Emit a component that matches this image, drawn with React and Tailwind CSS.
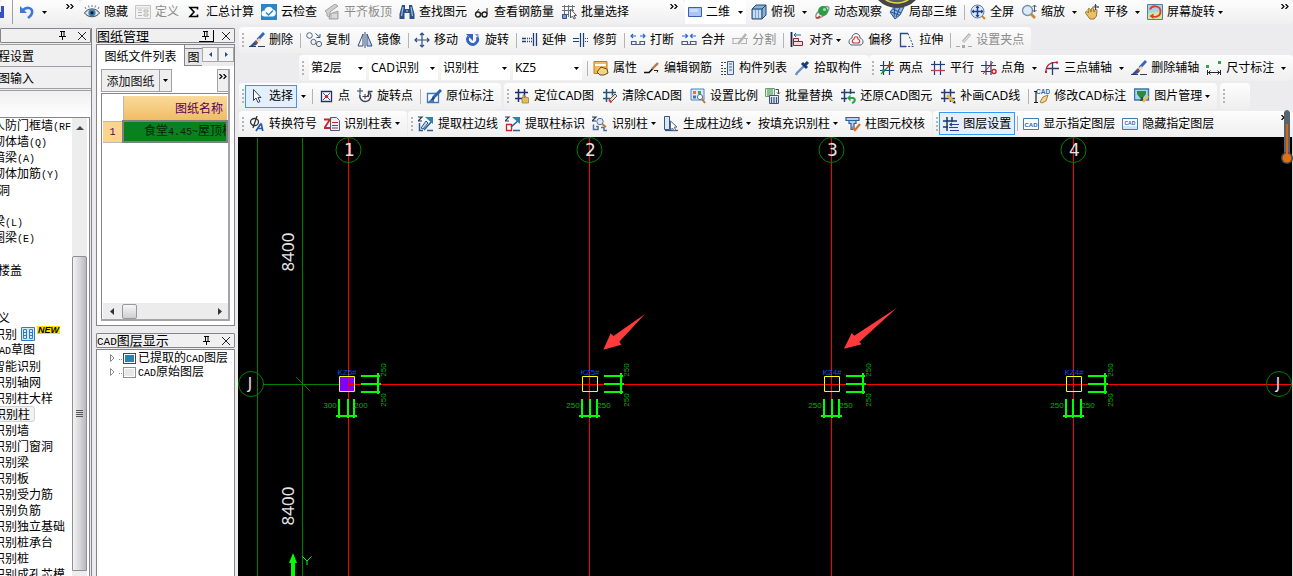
import React from "react";

const NAVY = "#1f3f7a";

function Svg({ children }) {
  return (
    <svg viewBox="0 0 16 16" className="h-4 w-4 shrink-0" fill="none" aria-hidden="true">
      {children}
    </svg>
  );
}

const grid = "M4.5 1v14M10.5 1v14M1 5.5h14M1 10.5h14";

const icons = {
  save: (
    <>
      <path d="M1 2h14v12H1z" fill="#3b4fc4" />
      <path d="M4 2h8v6H4z" fill="#e8ecfa" />
      <path d="M5 10h6v4H5z" fill="#c9cdea" />
    </>
  ),
  undo: (
    <>
      <path d="M4 6c4-4 10-2 9 3-.5 3-3 4-4 5" stroke="#3f78d6" strokeWidth="2.6" />
      <path d="M1 2v7h7z" fill="#3f78d6" />
    </>
  ),
  eye: (
    <>
      <path d="M.5 9C4 3.500 12 3.500 15.500 9 12 14 4 14 .5 9z" fill="#dfe7ee" stroke="#3a4650" />
      <circle cx="8" cy="8.800" r="3.600" fill="#3d7fb5" />
      <circle cx="8" cy="8.800" r="1.600" fill="#0d1a26" />
      <path d="M2 5 1 3M5 3.500 4.500 1.500M8 3V1M11 3.500l.5-2M14 5l1-2" stroke="#6f7c88" />
    </>
  ),
  define: (
    <>
      <path d="M.5 1.500h15v13H.5z" fill="#f3f3f3" stroke="#c4c4c4" />
      <path d="M.5 4h15" stroke="#d0d0d0" />
      <path d="M3 6h4M3 8.500h4M3 11.500h4M9 6h4v2H9zM9 10h4v2H9z" stroke="#b5b5b5" />
    </>
  ),
  sigma: <path d="M11.500 5.500v-2H4l4 4.500-4 4.500h7.500v-2" stroke="#000" strokeWidth="1.600" />,
  cloud: (
    <>
      <path d="M0 0h16v16H0z" fill="#2b86c9" />
      <path d="M3.500 12.500a3 3 0 0 1 0-6 4.500 4.500 0 0 1 8.500-1 3.600 3.600 0 0 1 0 7z" fill="#fff" />
      <path d="m5 8.500 2.500 2.500L12 6.500" stroke="#2b86c9" strokeWidth="1.500" />
    </>
  ),
  slab: (
    <>
      <path d="M1 7 11 0l3 2-8 6v5l-3-1V9z" fill="#cfcfcf" stroke="#a4a4a4" />
      <path d="M6 10l8-3v8H5z" fill="#c2c2c2" stroke="#a4a4a4" />
      <path d="M8 11h5M8 13h5" stroke="#f2f2f2" />
    </>
  ),
  binoc: (
    <>
      <path d="M3 1h3v4h4V1h3l2.500 9v5h-5V9h-5v6h-5v-5z" fill="#2c4f86" />
      <path d="M4 3 2.500 12M12 3l1.500 9" stroke="#9db9e4" strokeWidth="1.300" />
      <path d="M7 6h2v2H7z" fill="#6f93cc" />
    </>
  ),
  glasses: (
    <>
      <circle cx="4" cy="10.500" r="2.500" stroke="#222" strokeWidth="1.400" />
      <circle cx="10.500" cy="10.500" r="2.500" stroke="#222" strokeWidth="1.400" />
      <path d="M6.500 10h2M1.500 9.500 5 5M13 10V4" stroke="#222" />
    </>
  ),
  batchSel: (
    <>
      <path d="M3.500 1v13M7.500 1v12M11.500 1v6M1 2.500h13M1 6.500h12M1 10.500h7" stroke="#68727e" />
      <path d="M1.500 10.500h4v4h-4z" fill="#7f9dd8" stroke="#2f4fa0" />
      <path d="M9.500 5v9l2-2 1.500 3 1.500-.8-1.500-2.700h2.500z" fill="#fff" stroke="#555" />
    </>
  ),
  rect: (
    <>
      <path d="M1.500 3.500h13v9h-13z" fill="#a9c4f5" stroke="#3a5fb0" />
      <path d="M3 5h8v3H3z" fill="#cbdcfb" />
    </>
  ),
  cube: (
    <>
      <path d="M1 5 5 1h10v10l-4 4H1z" fill="#87b2dc" stroke="#24476f" />
      <path d="M1 5h10l4-4M11 5v10" stroke="#24476f" />
      <path d="M2 6h8v8H2z" fill="#c7def2" />
      <path d="M4.500 6v8M7.500 6v8" stroke="#7ba5cf" />
    </>
  ),
  orbit: (
    <>
      <ellipse cx="8" cy="8.500" rx="8" ry="3.500" transform="rotate(-40 8 8)" stroke="#8a93a0" strokeWidth="1.400" />
      <circle cx="9" cy="7" r="4.900" fill="#2e9b45" />
      <circle cx="10.500" cy="5.500" r="1.600" fill="#9fe0a0" />
      <path d="M2 13.500c2 1 3 0 4-1.500" stroke="#c9402e" strokeWidth="1.800" />
    </>
  ),
  local3d: (
    <>
      <path d="M1 8 6 2l9 1-4 8-5 4z" fill="#8fb6e6" stroke="#2a508c" />
      <path d="M4 5l8 4M6 2l-1 11M11 3 7 13M2 8l8 3" stroke="#2a508c" />
    </>
  ),
  full: (
    <>
      <circle cx="7.500" cy="7.500" r="6.500" fill="#dce8f7" stroke="#5d7fb0" />
      <path d="M7.500 2v11M2 7.500h11" stroke="#1c3f8a" strokeWidth="1.500" />
      <path d="m5.500 4 2-2.500 2 2.500zM5.500 11l2 2.500 2-2.500zM4 5.500 1.500 7.500 4 9.500zM11 5.500l2.500 2-2.500 2z" fill="#1c3f8a" />
      <path d="m12 12 3 3" stroke="#c98b2a" strokeWidth="2.200" />
    </>
  ),
  zoom: (
    <>
      <circle cx="6.500" cy="6.500" r="5" fill="#dbe9f8" stroke="#7391b3" strokeWidth="1.400" />
      <path d="m10 10 4 4" stroke="#c98b2a" strokeWidth="2.600" />
      <path d="M13.500 1v7M11.500 3l2-2 2 2M11.500 6l2 2 2-2" stroke="#4b5a70" />
    </>
  ),
  pan: (
    <>
      <path d="M1.500 9c0-2.500 2-2 3 0L4 5c.5-1 2-.5 2.300.5L7 8l.5-3.500C8 3.500 9.500 4 9.500 5l.5 3 1-2.500c.8-.8 2 0 2 1L12.500 12 10 15H6z" fill="#e7c06a" stroke="#9c7428" />
      <path d="M11.500 0v6M8.500 3h6M10.500 1.500l1-1 1 1M13.500 2l1 1-1 1" stroke="#3c4650" />
    </>
  ),
  screenRot: (
    <>
      <path d="M.5.500h15v15H.5z" fill="#a8d1ea" stroke="#4b83a6" />
      <path d="M1 10c4-3 9-1 14-3v8H1z" fill="#d5e79a" />
      <path d="M3 5.500c2-5 10.500-4 10.500 2 0 4.500-4 6-7.500 5" stroke="#e0392f" strokeWidth="1.800" />
      <path d="M6.500 9.500v5.500L2.500 12z" fill="#e0392f" />
    </>
  ),
  brush: (
    <>
      <path d="M15 1 8.500 8" stroke="#3666b8" strokeWidth="2.800" />
      <path d="m10 6-3 3 2 2 3-3z" fill="#f0d9a6" />
      <path d="M7 8 4 11l-3 3c3 .5 6 0 8-3z" fill="#344f8b" />
      <path d="M6 9.500 8 11" stroke="#cf3b3b" strokeWidth="1.400" />
      <path d="M0 14.500h7M9 14.500h7" stroke="#2b3f66" />
    </>
  ),
  copy: (
    <>
      <circle cx="3.500" cy="3.500" r="2.800" stroke="#556377" />
      <circle cx="7.500" cy="10" r="2.600" stroke="#556377" />
      <circle cx="13" cy="12" r="2.600" stroke="#556377" />
      <path d="m9.500 1.500 4 3.500M14 2v3.500h-3.500" stroke="#2956a8" />
    </>
  ),
  mirror: (
    <>
      <path d="M6 2v12H1z" stroke="#35507c" />
      <path d="M10 2v12h5z" fill="#b9cdec" stroke="#35507c" />
      <path d="M8 0v16" stroke="#35507c" />
    </>
  ),
  move: (
    <path d="M8 1v14M1 8h14M6 3l2-2 2 2M6 13l2 2 2-2M3 6 1 8l2 2M13 6l2 2-2 2" stroke="#2f4f80" strokeWidth="1.200" />
  ),
  rotate: (
    <>
      <path d="M3.500 4.500a5 5 0 1 0 8.500.5" stroke="#3263c8" strokeWidth="2.800" />
      <path d="M1 2h7v7z" fill="#3263c8" />
      <path d="M9.500 2h4v4" fill="#7ea1e6" />
    </>
  ),
  extend: (
    <path d="M0 6.500h4M0 9.500h4M5 6.500h1M7 6.500h1M9 6.500h1M5 9.500h1M7 9.500h1M9 9.500h1M11.500 1v13M14.500 1v13" stroke={NAVY} strokeWidth="1.300" />
  ),
  trim: (
    <path d="M0 6.500h6M0 9.500h6M7.500 1v14M10.500 1v14M12 6.500h1M14 6.500h1M12 9.500h1M14 9.500h1" stroke={NAVY} strokeWidth="1.200" />
  ),
  breakIt: (
    <>
      <path d="M1 4h5M3 2 1 4l2 2M15 4h-5M13 2l2 2-2 2" stroke="#2f66d0" strokeWidth="1.200" />
      <path d="M1.500 9.500H6v3H1.500zM10 9.500h4.500v3H10zM6 12.500h4" stroke="#4d5f78" strokeWidth="1.200" />
    </>
  ),
  merge: (
    <>
      <path d="M1 4h5M4.500 2l2 2-2 2M15 4h-5M11.500 2l-2 2 2 2" stroke="#2f66d0" strokeWidth="1.200" />
      <path d="M1 9.500h5.500v3H1zM9.500 9.500H15v3H9.500zM6 12.500h4" stroke="#4d5f78" strokeWidth="1.200" />
    </>
  ),
  split: (
    <>
      <path d="M0 6.500h9M12 6.500h4M0 11.500h5M9 11.500h6M1 6.500v5M14.500 6.500v5" stroke="#b2b2b2" />
      <path d="m6 12 8-10" stroke="#b4b4b4" strokeWidth="2.400" />
    </>
  ),
  align: (
    <>
      <path d="M2.500 0v15" stroke="#1b2a4a" strokeWidth="1.800" />
      <path d="M5 3h7M7 1 5 3l2 2" stroke="#2f54b8" />
      <path d="M4.500 6.500h5v3h4v4h-9z" fill="#f4dadd" stroke="#8d2537" />
      <path d="M5 9.500h5" stroke="#8d2537" />
    </>
  ),
  offset: (
    <>
      <path d="M4 6c0-6 8-6 8 0 4 1 4 7 0 7H4c-4 0-4-6 0-7z" stroke="#50627c" />
      <path d="M6 7c0-3 4-3 4 0 2.500 1 2 4 0 4H6c-2 0-2.500-3 0-4z" stroke="#d13a3a" strokeWidth="1.200" />
    </>
  ),
  stretch: (
    <>
      <path d="M9 1.500H1.500v13H7" stroke="#2b4c86" strokeWidth="1.300" />
      <path d="M9 1.500 14.500 14.500H7" stroke="#2b4c86" strokeDasharray="2 1.500" />
    </>
  ),
  grip: (
    <>
      <path d="M0 14.500h4M12 14.500h4" stroke="#a8a8a8" />
      <path d="M6 13h3v3H6z" fill="#a8a8a8" />
      <path d="m7 10 7-8" stroke="#b8b8b8" strokeWidth="3.200" />
      <path d="m7.500 10 6-7" stroke="#eee" />
    </>
  ),
  prop: (
    <>
      <path d="M1 1.500h13v12H1z" fill="#f5b75c" stroke="#c87a1f" />
      <path d="M2 4h11v2H2z" fill="#fff" />
      <path d="M4 12 8 7l6 2 1 4-4 2H7z" fill="#f4d18c" stroke="#6b4a17" />
    </>
  ),
  editBar: (
    <>
      <path d="M0 12.500h5l4-4" stroke="#111" strokeWidth="1.600" />
      <path d="m8 9 6-6" stroke="#b67a4a" strokeWidth="2.400" />
      <path d="M10 10.500h4l-1 2" stroke="#222" />
    </>
  ),
  list: (
    <>
      <path d="M2 2.500h2M2 5.500h2M2 8.500h2M2 11.500h2M5 2.500h2M5 8.500h2M5 11.500h2M5 14.500h2M2 14.500h2" stroke="#444" />
      <path d="M8.500 1.500h6v13h-6z" fill="#dfe9f8" stroke="#3d5f96" />
      <path d="M10 4h3M10 7h3M10 10h3" stroke="#3d5f96" />
    </>
  ),
  dropper: (
    <>
      <path d="m11 5-8 8-1 2" stroke="#6d90c2" strokeWidth="2.400" />
      <path d="m8 3 5 5M11 5l3-3" stroke="#153c7d" strokeWidth="3" />
    </>
  ),
  twoPoint: (
    <>
      <path d={grid} stroke={NAVY} strokeWidth="1.200" />
      <path d="m2 14 12-12" stroke="#2c8f2c" strokeWidth="1.200" />
      <circle cx="10.500" cy="5.500" r="1.600" fill="#c9232b" />
      <circle cx="4.500" cy="10.500" r="1.600" fill="#238a29" />
    </>
  ),
  parallel: (
    <>
      <path d="M4.500 1v14M10.500 1v14" stroke={NAVY} strokeWidth="1.200" />
      <path d="M1 4.500h14" stroke={NAVY} strokeWidth="1.200" />
      <path d="M1 10.500h14" stroke="#c13e4d" strokeWidth="1.300" />
    </>
  ),
  pointAngle: (
    <>
      <path d="M5 1v14M10 1v14M0 5.500h15M0 11.500h10" stroke={NAVY} strokeWidth="1.200" />
      <path d="M2 14 12 2" stroke="#c9232b" />
      <circle cx="13" cy="11.500" r="2" fill="#fff" stroke="#c9232b" strokeWidth="1.500" />
    </>
  ),
  threeArc: (
    <>
      <path d="M2 12C2 5 6 2 13 2.500" stroke="#c9232b" strokeWidth="1.300" />
      <path d="M8.500 2v13M3 8.500h12" stroke="#2b3f74" strokeWidth="1.300" />
      <path d="M1 11h2v2H1zM12 1.500h2v2h-2z" fill="#c9232b" />
    </>
  ),
  dim: (
    <>
      <path d="M0 5h3v3H0zM12 1h3v3h-3z" fill="#35a243" />
      <path d="M1.500 10v5M14.500 10v5M2 12.500h12M4.500 10.500l-2 2 2 2M11.500 10.500l2 2-2 2" stroke="#20242c" />
    </>
  ),
  cursor: <path d="M4.500 1.500v11l2.500-2.500 2 4.500 2-1-2-4H12z" fill="#fff" stroke="#33435e" />,
  point: (
    <>
      <path d="M3.500 3.500h10v10h-10z" fill="#fff" stroke="#25305c" strokeWidth="1.300" />
      <path d="m5 5 7 7M12 5l-7 7" stroke="#3650a8" />
      <circle cx="8.500" cy="8.500" r="1.800" fill="#d02a2a" />
    </>
  ),
  rotPoint: (
    <>
      <path d="M3 6.500a5.500 5.500 0 1 0 9.500-2" stroke="#33415a" strokeWidth="1.400" />
      <path d="M0 3h6M3 0v6M8 6v5M5.500 8.500h5" stroke="#33415a" />
      <path d="M11.500 7.500v-4h4" stroke="#33415a" strokeWidth="1.300" />
      <path d="M10 7h2v2h-2z" fill="#c9232b" />
    </>
  ),
  annot: (
    <>
      <path d="M1.500 5.500h11v9h-11z" fill="#fff" stroke="#4176bd" strokeWidth="1.300" />
      <path d="M2 14 8 8v6z" fill="#4176bd" />
      <path d="m7 10 8-8" stroke="#2a62ac" strokeWidth="3" />
      <path d="m5 12 2-3 2 2z" fill="#24354f" />
    </>
  ),
  locate: (
    <>
      <path d="M4.500 1v13M10.500 1v7M1 4.500h13M1 10.500h7" stroke="#1d2d73" strokeWidth="1.500" />
      <path d="M8 15V9l1 1V7h1.500v3l1-2 1 2 1-1 1 1v5z" fill="#e2bd61" stroke="#94702a" strokeWidth=".7" />
    </>
  ),
  clearCad: (
    <>
      <path d="M4.500 1v13M10.500 1v7M1 4.500h13M1 10.500h7" stroke="#26557a" strokeWidth="1.500" />
      <path d="m8 13 5-6" stroke="#eadfca" strokeWidth="3.500" />
      <path d="m7 12 6-6 2 2-6 6z" stroke="#5b4b55" />
      <path d="m7 12 2.500 2.500" stroke="#c33" strokeWidth="1.800" />
    </>
  ),
  scale: (
    <>
      <path d="M1 1h13v11H1z" fill="#dcebfa" stroke="#4b86c2" />
      <path d="M3 3h3v3H3z" fill="#e2792b" />
      <path d="M8 3h3v3H8z" fill="#55a33e" />
      <path d="M3 7.500h3v3H3z" fill="#3d74c7" />
      <circle cx="10" cy="9" r="2.600" fill="#fff" stroke="#58708e" />
      <path d="m12 11 3 4" stroke="#b67626" strokeWidth="1.800" />
    </>
  ),
  replace: (
    <>
      <path d="M.5.500h9v8h-9z" fill="#dcefdc" stroke="#65a06b" />
      <path d="M3 1v7M5 1v7M7 1v7" stroke="#478a4f" />
      <path d="M4.500 7.500h9v8h-9z" fill="#eef3fb" stroke="#3b5480" />
      <path d="M6.500 9v6M9 9v6M11.500 9v6" stroke="#3b5480" strokeWidth="1.300" />
      <path d="M10.500 1.500h3V6M12 4.500 13.500 6 15 4.500" stroke="#444" />
    </>
  ),
  restore: (
    <>
      <path d="M4.500 1v13M10.500 1v5M1 4.500h14M1 10.500h6" stroke="#20407d" strokeWidth="1.500" />
      <path d="M9 10h4c3 1 2 4-1 5" stroke="#2ea043" strokeWidth="2" />
      <path d="M10.500 6.500v7L7 10z" fill="#2ea043" />
    </>
  ),
  patch: (
    <>
      <path d="M4.500 1v13M10.500 1v13M1 4.500h14M1 10.500h14" stroke="#253a7c" strokeWidth="1.500" />
      <path d="m7 7 6.500 6.500" stroke="#e2b74d" strokeWidth="2.800" />
      <path d="m12.500 15 3 .5-.5-3z" fill="#222" />
    </>
  ),
  cadEdit: (
    <>
      <text x="2" y="6" fontSize="6.500" fontWeight="700" fontFamily="Liberation Sans, sans-serif" fill="#2a6fb4">CAD</text>
      <path d="M2 3v12M0 3.500h3M0 14.500h4" stroke="#1a1a1a" strokeWidth="1.200" />
      <path d="m6 14 3-5 5-2-2 6-4 2z" fill="#f2d49a" stroke="#a87b35" />
    </>
  ),
  picture: (
    <>
      <path d="M.5 1h14v11H.5z" fill="#a8d3f4" stroke="#3d74ab" strokeWidth="1.400" />
      <path d="M3 3h9v3l-3 4H6L3 6z" fill="#2c8a39" />
      <path d="M7 9h2v4H6z" fill="#33513a" />
      <path d="m9 14 5-6" stroke="#e8bd56" strokeWidth="2.600" />
    </>
  ),
  phi: (
    <>
      <ellipse cx="5.500" cy="6" rx="4" ry="3.500" stroke="#30343c" strokeWidth="1.300" />
      <path d="M8 0 4 12" stroke="#30343c" strokeWidth="1.300" />
      <path d="m7 15 4.500-7h.8l1.500 7M9.500 12.500h4" stroke="#2a5cac" strokeWidth="1.700" />
    </>
  ),
  table: (
    <>
      <path d="M6.500 1.500h6l3 3v10h-9z" fill="#eaf1fa" stroke="#3f5b86" />
      <path d="M8 6.500h6M8 9.500h6M8 12h6" stroke="#c9232b" />
      <path d="M0 3.500h6L.5 12H6" stroke="#c9232b" strokeWidth="1.800" />
    </>
  ),
  edge: (
    <>
      <path d="M0 1h4L0 5h4" stroke="#22365c" strokeWidth="1.200" />
      <path d="M1.500 7v7.500H5M6 14 14 5M9 14.500h6" stroke="#2b5e95" strokeWidth="1.500" />
      <path d="m7 1 8 0v7z" fill="#2f83aa" />
      <path d="m3 12 5-7 2 2-5 6z" fill="#bfdcf0" stroke="#28598a" />
    </>
  ),
  mark: (
    <>
      <path d="M0 1h4L0 5h4" stroke="#22365c" strokeWidth="1.200" />
      <path d="M1.500 8.500h5v6h-5z" fill="#fff" stroke="#c9232b" strokeWidth="1.300" />
      <path d="M6 11 14 4M8 14.500h7" stroke="#2b5e95" strokeWidth="1.500" />
      <path d="m7 1 8 0v7z" fill="#2f83aa" />
    </>
  ),
  recog: (
    <>
      <path d="M0 1h4L0 5h4" stroke="#22365c" strokeWidth="1.200" />
      <circle cx="8" cy="5.500" r="3.200" fill="#dbe9f8" stroke="#52709c" />
      <path d="m10 8 4 3" stroke="#ba7d34" strokeWidth="2" />
      <path d="M1.500 8.500v5H6v-3H4M9 11.500h3v3h3" stroke="#52709c" strokeWidth="1.500" />
    </>
  ),
  gen: (
    <>
      <path d="M1.500.5h5v13h-5z" fill="#dbe6f5" stroke="#36558a" />
      <path d="M2 14.500h13" stroke="#36558a" strokeWidth="1.300" />
      <path d="M7.500 5v9l2-2 1.500 3 1.500-.8L11.500 11H14z" fill="#fff" stroke="#59657a" />
    </>
  ),
  check: (
    <>
      <path d="M1 1.500h13v3H1zM4 4.500h7v3H9v6H6v-6H4z" fill="#b5d2f0" stroke="#2c60a0" strokeWidth="1.200" />
      <path d="m7 11 3 3 5-6" stroke="#d5722b" strokeWidth="2.200" />
    </>
  ),
  layerSet: (
    <>
      <path d="M4 1v14M9 1v5M0 5h14M0 11h5" stroke="#1d3768" strokeWidth="1.500" />
      <path d="M8 8.500h8M6 11.500h9M7 14.500h9M9 7l-2 1.500L9 10" stroke="#2a3da0" strokeWidth="1.200" />
    </>
  ),
  cadShow: (
    <>
      <path d="M.5 2.500h15v11H.5z" fill="#fff" stroke="#3a7fb8" />
      <text x="1.500" y="10.500" fontSize="6" fontWeight="700" fontFamily="Liberation Sans, sans-serif" fill="#1f66ab">CAD</text>
    </>
  ),
  cadHide: (
    <>
      <path d="M.5 2.500h15v11H.5z" fill="#fff" stroke="#3a7fb8" />
      <path d="M1 10h14v3H1z" fill="#cfe4f5" />
      <text x="2.500" y="9" fontSize="5" fontWeight="700" fontFamily="Liberation Sans, sans-serif" fill="#1f66ab">CAD</text>
    </>
  ),
};

function Arrow() {
  return (
    <svg viewBox="0 0 5 3" className="h-[3px] w-[5px] shrink-0" aria-hidden="true">
      <path d="M0 0h5L2.500 3z" fill="#000" />
    </svg>
  );
}

function Tool({ icon, label, disabled, active, menu, split }) {
  const tone = disabled ? "text-[#8c8c8c]" : "text-black";
  const gap = label.includes("CAD") ? "mr-2" : "mr-[7px]";
  const frame = active ? "-ml-1 mr-0.5 h-[23px] border border-[#3399ff] bg-[#e3effb] px-[3px]" : split ? "" : gap;
  const button = (
    <button type="button" disabled={disabled} className={`flex shrink-0 items-center gap-1 ${tone} ${frame}`}>
      {icon && <Svg>{icons[icon]}</Svg>}
      <span>{label}</span>
      {menu && <span className="-ml-1 flex w-2 justify-end"><Arrow /></span>}
    </button>
  );
  if (!split) return button;
  return (
    <>
      {button}
      <button type="button" aria-label={`${label}选项`} className={`flex h-5 shrink-0 items-center justify-center ${active ? "mr-0.5 w-2" : "w-[19px]"}`}>
        <Arrow />
      </button>
    </>
  );
}

function Sep() {
  return <span className="mr-[5px] h-[15px] w-px shrink-0 bg-[#b4b4b8]" />;
}

function Bar({ children, grip = true, className = "" }) {
  return (
    <div role="toolbar" className={`flex h-[26px] shrink-0 items-center rounded-sm bg-linear-to-b from-[#fdfdfd] to-[#efefef] pl-[3px] ${className}`}>
      {grip && (
        <span className="mr-[5px] flex shrink-0 flex-col gap-0.5">
          <i className="h-0.5 w-0.5 bg-[#b5b5b9]" />
          <i className="h-0.5 w-0.5 bg-[#b5b5b9]" />
          <i className="h-0.5 w-0.5 bg-[#b5b5b9]" />
          <i className="h-0.5 w-0.5 bg-[#b5b5b9]" />
        </span>
      )}
      {children}
    </div>
  );
}

function Combo({ label, value, width, icon }) {
  return (
    <div className={`relative mr-[3px] block h-6 shrink-0 bg-white ${width}`}>
      {icon && <span className="absolute top-1 left-0.5"><Svg>{icons[icon]}</Svg></span>}
      <select aria-label={label} className={`h-6 w-full appearance-none bg-transparent leading-6 outline-none ${icon ? "pl-[21px]" : "pl-0.5"}`}>
        <option>{value}</option>
      </select>
      <span className="pointer-events-none absolute top-[11px] right-[3px] block"><Arrow /></span>
    </div>
  );
}

function More({ className = "" }) {
  return (
    <button type="button" aria-label="更多" className={`shrink-0 ${className}`}>
      <svg viewBox="0 0 8 5" className="h-[5px] w-2" fill="none">
        <path d="m.5 0 2.500 2.500L.5 5M4.500 0 7 2.500 4.500 5" stroke="#000" strokeWidth="1.200" />
      </svg>
    </button>
  );
}

function Mixed({ children, size = "text-[10px]" }) {
  return children.split(/([\x20-\x7e]+)/).map((part, i) =>
    /^[\x20-\x7e]+$/.test(part) ? (
      <span key={i} className={`font-['Liberation_Mono','Noto_Sans_CJK_SC',monospace] ${size}`}>{part}</span>
    ) : (
      part
    )
  );
}

function PanelHead({ title, raised }) {
  return (
    <div className="flex h-[15px] shrink-0 items-center rounded-[1px] border border-[#85858b] bg-[#f0f0f0]">
      <h2 className="min-w-0 flex-1 text-[13px] leading-[13px] whitespace-nowrap"><Mixed size="text-[11px]">{title}</Mixed></h2>
      <button type="button" aria-label="固定" className={`mr-1.5 flex h-3 w-[15px] items-center justify-center ${raised ? "border-r border-b border-black" : ""}`}>
        <svg viewBox="0 0 8 9" className="h-[9px] w-2" fill="none">
          <path d="M2.500 0v5M1 .5h5M5 0v5M0 5.500h7M3.500 6v3" stroke="#000" />
        </svg>
      </button>
      <button type="button" aria-label="关闭" className="mr-0.5 flex h-3 w-3 items-center justify-center">
        <svg viewBox="0 0 8 8" className="h-2 w-2" fill="none">
          <path d="m0 0 8 8M8 0 0 8" stroke="#222" />
        </svg>
      </button>
    </div>
  );
}

const tree = [
  "人防门框墙(RF", "砌体墙(Q)", "暗梁(A)", "砌体加筋(Y)", "洞", "", "梁(L)", "圈梁(E)", "", "楼盖", "", "",
  "义", "识别", "CAD草图", "智能识别", "识别轴网", "识别柱大样", "识别柱", "识别墙", "识别门窗洞", "识别梁",
  "识别板", "识别受力筋", "识别负筋", "识别独立基础", "识别桩承台", "识别桩", "识别成孔芯模",
];

function indent(text) {
  if (text === "楼盖") return "-ml-0.5";
  if (text.length === 1) return "-ml-0.5";
  return "-ml-[7px]";
}

function ModulePanel() {
  return (
    <aside className="flex w-[92px] shrink-0 flex-col overflow-hidden border-r border-[#85858b]">
      <PanelHead title="" />
      <button type="button" className="mt-px h-[23px] shrink-0 border-y border-[#a0a0a6] bg-[#f0f0f0] text-left"><span className="-ml-0.5">程设置</span></button>
      <button type="button" className="-mt-px h-[23px] shrink-0 border-y border-[#a0a0a6] bg-[#f0f0f0] text-left"><span className="-ml-0.5">图输入</span></button>
      <div className="mt-px h-[27px] shrink-0 border-t border-[#a0a0a6] bg-linear-to-b from-[#f0f0f0] to-white" />
      <div className="mr-px flex min-h-0 flex-1 border-t border-r border-[#85858b] bg-white">
        <ul className="min-w-0 flex-1 overflow-hidden leading-4 whitespace-nowrap">
          {tree.map((t, i) => (
            <li key={i} className="flex h-4 items-center">
              <span className={`inline-flex h-4 items-center ${indent(t)} ${t === "识别柱" ? "rounded-[3px] border border-[#d4d4d4] bg-[#f2f2f2] pr-1" : ""}`}>
                <span><Mixed>{t}</Mixed></span>
                {t === "识别" && (
                  <>
                    <svg viewBox="0 0 14 14" className="ml-1 h-3.5 w-3.5" fill="none" aria-hidden="true">
                      <path d="M.5.5h13v13H.5z" fill="#d6e9fb" stroke="#2d7cc8" />
                      <path d="M2.500 2.500h3v9h-3zM8.500 2.500h3v9h-3zM3 5.500h3M3 8.500h3M9 5.500h3M9 8.500h3" stroke="#2d7cc8" />
                    </svg>
                    <b className="mb-2 ml-0.5 bg-[#ffe100] px-px font-['Liberation_Sans',sans-serif] text-[9px] leading-2 italic">NEW</b>
                  </>
                )}
              </span>
            </li>
          ))}
        </ul>
        <div className="mr-0.5 flex w-[15px] shrink-0 flex-col items-center bg-[#ededee]">
          <svg viewBox="0 0 8 4" className="mt-2 h-1 w-2"><path d="M0 4h8L4 0z" fill="#444" /></svg>
          <div className="mt-[126px] flex w-full flex-1 flex-col items-center justify-center gap-px rounded-t-[2px] border border-[#8f8f93] bg-linear-to-r from-[#f3f3f3] via-[#d9d9dc] to-[#b9b9bd]">
            <i className="h-px w-[7px] bg-[#555]" />
            <i className="h-px w-[7px] bg-[#555]" />
            <i className="h-px w-[7px] bg-[#555]" />
            <i className="h-px w-[7px] bg-[#555]" />
          </div>
          <div className="h-[5px]" />
        </div>
      </div>
    </aside>
  );
}

function DrawingPanel() {
  return (
    <aside className="ml-1 flex w-[139px] shrink-0 flex-col">
      <PanelHead title="图纸管理" raised />
      <section className="mt-px flex h-[282px] shrink-0 flex-col border border-[#85858b] bg-white">
        <div className="flex h-[21px] shrink-0 items-end bg-[#ececee]">
          <button type="button" className="h-[21px] w-[88px] shrink-0 border-r border-[#85858b] bg-white leading-5">图纸文件列表</button>
          <button type="button" className="h-[18px] min-w-0 flex-1 border-t border-b border-[#85858b] bg-[#e6e6e6] leading-4">图</button>
          <button type="button" aria-label="向左" className="mb-1 flex h-[15px] w-4 items-center justify-center border border-[#a8a8ac] bg-[#f4f4f4]">
            <svg viewBox="0 0 3 5" className="h-[5px] w-[3px]"><path d="M3 0v5L0 2.500z" fill="#274c94" /></svg>
          </button>
          <button type="button" aria-label="向右" className="mb-1 flex h-[15px] w-4 items-center justify-center border border-[#a8a8ac] bg-[#f4f4f4]">
            <svg viewBox="0 0 3 5" className="h-[5px] w-[3px]"><path d="M0 0v5l3-2.500z" fill="#274c94" /></svg>
          </button>
        </div>
        <div className="m-1 mt-[3px] flex min-h-0 flex-1 flex-col border-r-2 border-b-2 border-[#a3a3a8]">
          <div className="flex h-[23px] shrink-0 items-stretch border border-[#a0a0a6] border-r-0 bg-[#efefef]">
            <button type="button" className="w-[58px] border-r border-[#a0a0a6] leading-5 whitespace-nowrap text-[#111]">添加图纸</button>
            <button type="button" aria-label="添加图纸选项" className="flex w-3 items-center justify-center border-r border-[#a0a0a6]"><Arrow /></button>
            <span className="-my-px flex-1 bg-white" />
            <More className="flex w-[11px] justify-center border-l border-[#a0a0a6] pt-1" />
          </div>
          <div className="mt-px flex min-h-0 flex-1 flex-col border-t border-l border-[#85858b] pt-0.5 pl-px">
            <table className="w-full table-fixed border-collapse">
              <thead>
                <tr className="h-[25px]">
                  <th aria-label="序号" className="w-5 border-r border-b border-[#b9b9bd] p-0" />
                  <th className="overflow-hidden bg-linear-to-b from-[#fad99a] to-[#efbd63] p-0 pr-1 text-right font-normal text-[#5b005b]">图纸名称</th>
                </tr>
              </thead>
              <tbody>
                <tr className="h-[20px]">
                  <td className="border-b border-[#b9b9bd] bg-[#fdd48d] p-0 text-center text-[#5b005b]"><Mixed>1</Mixed></td>
                  <td className="overflow-hidden border-2 border-[#808080] bg-[#08821f] p-0 pl-5 leading-4 whitespace-nowrap text-[#04240a]"><Mixed>食堂4.45~屋顶柱</Mixed></td>
                </tr>
              </tbody>
            </table>
            <div className="flex-1" />
            <div className="flex h-4 items-center bg-[#ececec] pl-[7px]">
              <svg viewBox="0 0 4 7" className="h-[7px] w-1"><path d="M4 0v7L0 3.500z" fill="#333" /></svg>
              <div className="ml-2 h-[15px] w-[15px] rounded-[2px] border border-[#98989c] bg-linear-to-b from-[#f6f6f6] to-[#cfcfd3]" />
              <svg viewBox="0 0 4 7" className="mr-1.5 ml-auto h-[7px] w-1"><path d="M0 0v7l4-3.500z" fill="#333" /></svg>
            </div>
          </div>
        </div>
      </section>
      <div className="mt-[7px]"><PanelHead title="CAD图层显示" /></div>
      <ul className="mt-px min-h-0 flex-1 border border-b-0 border-[#85858b] bg-white pt-px leading-3.5 whitespace-nowrap">
        {[["已提取的CAD图层", true], ["CAD原始图层", false]].map(([name, on]) => (
          <li key={name}>
            <label className="flex h-3.5 items-center pl-[13px]">
              <svg viewBox="0 0 13 8" className="h-2 w-[13px]" fill="none" aria-hidden="true">
                <path d="M.5.500v7L4 4zM9 5.500h1M11 5.500h1" stroke="#8a8a8a" />
              </svg>
              <input type="checkbox" defaultChecked={on} className="h-[11px] w-[13px] shrink-0 appearance-none border border-[#8a9096] bg-[#e7e7e7] ring-1 ring-white ring-inset checked:border-[#3c4a56] checked:bg-[#2585b5]" />
              <span className="ml-0.5"><Mixed>{name}</Mixed></span>
            </label>
          </li>
        ))}
      </ul>
    </aside>
  );
}

const columns = [
  { cx: 346, axis: 348.5, name: "KZ5#", left: "300", right: "200", marks: [339, 348, 354], filled: true },
  { cx: 589, axis: 589.5, name: "KZ5#", left: "250", right: "250", marks: [582, 590, 597] },
  { cx: 831, axis: 831.5, name: "KZ4#", left: "250", right: "250", marks: [824, 832, 839] },
  { cx: 1073, axis: 1073.5, name: "KZ4#", left: "250", right: "250", marks: [1066, 1073, 1081] },
];

function Column({ cx, axis, name, left, right, marks, filled }) {
  return (
    <g>
      {filled && <path d={`M${cx - 6} 377h14v14h-14z`} fill="#8000ff" />}
      <text x={cx + 1} y="375" textAnchor="middle" fill="#0c50e0" fontSize="8" fontFamily="Liberation Sans, sans-serif">{name}</text>
      {filled && <path d={`M${axis} 377v15M${axis} 384.500h7`} stroke="#f00" />}
      <path d={`M${cx - 6.5} 376.500h15v15h-15z`} fill="none" stroke="#ff0" />
      <g stroke="#0f0" strokeWidth="2">
        <path d={`M${cx + 15} 376h19M${cx + 15} 384h20M${cx + 15} 392h19M${cx + 32} 373v21`} />
        <path d={`M${marks[0]} 399v19M${marks[1]} 399v19M${marks[2]} 399v19M${marks[0] - 3} 416h21`} />
      </g>
      <g fill="#00b400" fontSize="8" fontFamily="Liberation Sans, sans-serif" textAnchor="middle">
        <text x={marks[0] - 9} y="408">{left}</text>
        <text x={marks[2] + 7} y="408">{right}</text>
        <text transform={`translate(${cx + 40} 370) rotate(-90)`}>250</text>
        <text transform={`translate(${cx + 40} 400) rotate(-90)`}>250</text>
      </g>
    </g>
  );
}

function Drawing() {
  return (
    <main className="relative min-h-0 flex-1 overflow-hidden border-r border-[#d8d8d8] bg-black">
      <svg className="absolute inset-0 h-full w-full" fontFamily="DejaVu Sans, sans-serif" aria-label="柱平面图">
        <g transform="translate(-238 -137)">
          <path d="M257.500 138v2000M302.500 138v2000M263 384.500h85M296 377l14 14" stroke="#008000" fill="none" />
          <path d="M355 384.500h912" stroke="#f00" />
          <path d="M1267 384.500h2000" stroke="#f00" />
          {columns.map((c, i) => (
            <g key={c.cx}>
              <path d={`M${c.axis} 138v2000`} stroke="#f00" />
              <circle cx={c.axis} cy="150" r="12.500" fill="none" stroke="#008000" />
              <text x={c.axis + 1} y="156" fontSize="17" textAnchor="middle" fill="#e4e4e4">{i + 1}</text>
              <Column {...c} />
            </g>
          ))}
          <g fill="none" stroke="#008000">
            <circle cx="251" cy="384" r="12.500" />
            <circle cx="1279" cy="384" r="12.500" />
          </g>
          <g fill="#e4e4e4" fontSize="17" textAnchor="middle">
            <text x="250" y="389" fontSize="15">J</text>
            <text x="1278" y="389" fontSize="15">J</text>
            <text transform="translate(294 252) rotate(-90)" fontFamily="Noto Sans, sans-serif">8400</text>
            <text transform="translate(294 506) rotate(-90)" fontFamily="Noto Sans, sans-serif">8400</text>
          </g>
          <path d="M293 553l4 10h-2v2000h-4V563h-2z" fill="#0f0" />
          <path d="M302.500 556.500l4.500 4.500 4.500-4.500M307 561v4" stroke="#0f0" fill="none" />
          <path d="M603.300 349.700 610.700 333.300l2.800 2.700L645 314l-25.700 27.700 2 3z" fill="#ff3b3b" />
          <path d="M844 348.700 851.700 333l2.600 2.700L897 307.700 859.300 342l2.400 2.300z" fill="#ff3b3b" />
        </g>
      </svg>
    </main>
  );
}

export default function App() {
  return (
    <div className="relative flex h-screen flex-col overflow-hidden bg-[#ececee] font-['Noto_Sans','Noto_Sans_CJK_SC',sans-serif] text-[12px] leading-4 whitespace-nowrap text-black">
      <header className="flex h-[26px] shrink-0 items-start overflow-hidden">
        <Bar grip={false} className="w-20 !h-6">
          <button type="button" aria-label="保存" className="-ml-3.5 mr-[7px] shrink-0"><Svg>{icons.save}</Svg></button>
          <span className="mr-1.5 h-6 w-px shrink-0 bg-[#a0a0a4]" />
          <button type="button" aria-label="撤销" className="mr-[7px] shrink-0"><Svg>{icons.undo}</Svg></button>
          <Arrow />
          <More className="mb-3 ml-auto mr-1.5" />
        </Bar>
        <Bar grip={false} className="w-[605px] !h-6">
          <span className="w-px shrink-0" />
          <Tool icon="eye" label="隐藏" />
          <Tool icon="define" label="定义" disabled />
          <Tool icon="sigma" label="汇总计算" />
          <Tool icon="cloud" label="云检查" />
          <Tool icon="slab" label="平齐板顶" disabled />
          <Tool icon="binoc" label="查找图元" />
          <Tool icon="glasses" label="查看钢筋量" />
          <Tool icon="batchSel" label="批量选择" />
          <More className="mb-3 ml-auto mr-[7px]" />
        </Bar>
        <Bar grip={false} className="!h-6 flex-1 !pl-0">
          <Combo label="视图" value="二维" width="w-[61px]" icon="rect" />
          <span className="w-0.5 shrink-0" />
          <Tool icon="cube" label="俯视" split />
          <Tool icon="orbit" label="动态观察" />
          <Tool icon="local3d" label="局部三维" />
          <Sep />
          <Tool icon="full" label="全屏" />
          <Tool icon="zoom" label="缩放" split />
          <Tool icon="pan" label="平移" split />
          <Tool icon="screenRot" label="屏幕旋转" menu />
          <More className="mb-3 ml-auto mr-1" />
        </Bar>
      </header>
      <div className="flex min-h-0 flex-1">
        <div className="flex shrink-0 pt-0.5 font-['Noto_Sans_CJK_SC',sans-serif]">
          <ModulePanel />
          <DrawingPanel />
        </div>
        <div className="ml-[3px] flex min-w-0 flex-1 flex-col">
          <div className="flex h-7 shrink-0 items-center pl-px">
            <Bar>
              <Tool icon="brush" label="删除" />
              <Sep />
              <Tool icon="copy" label="复制" />
              <Tool icon="mirror" label="镜像" />
              <Sep />
              <Tool icon="move" label="移动" />
              <Tool icon="rotate" label="旋转" />
              <Sep />
              <Tool icon="extend" label="延伸" />
              <Tool icon="trim" label="修剪" />
              <Sep />
              <Tool icon="breakIt" label="打断" />
              <Tool icon="merge" label="合并" />
              <Tool icon="split" label="分割" disabled />
              <Sep />
              <Tool icon="align" label="对齐" menu />
              <Tool icon="offset" label="偏移" />
              <Tool icon="stretch" label="拉伸" />
              <Sep />
              <Tool icon="grip" label="设置夹点" disabled />
            </Bar>
          </div>
          <div className="flex h-7 shrink-0 items-center pl-[61px]">
            <Bar>
              <Combo label="楼层" value="第2层" width="w-[57px]" />
              <Combo label="模块" value="CAD识别" width="w-[69px]" />
              <Combo label="构件类型" value="识别柱" width="w-[69px]" />
              <Combo label="构件" value="KZ5" width="w-[69px]" />
              <span className="w-0.5 shrink-0" />
              <Sep />
              <Tool icon="prop" label="属性" />
              <Tool icon="editBar" label="编辑钢筋" />
              <Tool icon="list" label="构件列表" />
              <Tool icon="dropper" label="拾取构件" />
            </Bar>
            <Bar className="flex-1">
              <Tool icon="twoPoint" label="两点" />
              <Tool icon="parallel" label="平行" />
              <Tool icon="pointAngle" label="点角" split />
              <Tool icon="threeArc" label="三点辅轴" split />
              <Tool icon="brush" label="删除辅轴" />
              <Tool icon="dim" label="尺寸标注" split />
            </Bar>
          </div>
          <div className="flex h-7 shrink-0 items-center gap-[3px] pl-px">
            <Bar>
              <Tool icon="cursor" label="选择" active split />
              <span className="w-[3px] shrink-0" />
              <Sep />
              <Tool icon="point" label="点" />
              <Tool icon="rotPoint" label="旋转点" />
              <Sep />
              <Tool icon="annot" label="原位标注" />
            </Bar>
            <Bar>
              <Tool icon="locate" label="定位CAD图" />
              <Tool icon="clearCad" label="清除CAD图" />
              <Tool icon="scale" label="设置比例" />
              <Tool icon="replace" label="批量替换" />
              <Tool icon="restore" label="还原CAD图元" />
              <Tool icon="patch" label="补画CAD线" />
              <Sep />
              <Tool icon="cadEdit" label="修改CAD标注" />
              <Tool icon="picture" label="图片管理" menu />
            </Bar>
            <Bar className="w-[30px]" />
          </div>
          <div className="flex h-[27px] shrink-0 items-center gap-px pl-px">
            <Bar>
              <Tool icon="phi" label="转换符号" />
              <Tool icon="table" label="识别柱表" menu />
            </Bar>
            <Bar>
              <Tool icon="edge" label="提取柱边线" />
              <Tool icon="mark" label="提取柱标识" />
              <Tool icon="recog" label="识别柱" menu />
              <Tool icon="gen" label="生成柱边线" menu />
              <Tool label="按填充识别柱" menu />
              <Tool icon="check" label="柱图元校核" />
            </Bar>
            <Bar className="flex-1">
              <Tool icon="layerSet" label="图层设置" active />
              <Sep />
              <Tool icon="cadShow" label="显示指定图层" />
              <Tool icon="cadHide" label="隐藏指定图层" />
              <More className="mb-3 ml-auto mr-1" />
            </Bar>
          </div>
          <Drawing />
        </div>
      </div>
      <svg viewBox="0 0 52 8" className="absolute top-0 left-[871px] h-2 w-[52px]" aria-hidden="true">
        <circle cx="26" cy="-18" r="26" fill="#45454b" />
        <circle cx="26" cy="-18" r="21" fill="#5a5a60" stroke="#d8d83a" strokeWidth="1.500" />
      </svg>
      <svg viewBox="0 0 12 56" className="absolute top-[109px] right-0 h-14 w-3" aria-hidden="true">
        <path d="M3 3q3-4 6 0v41H3z" fill="#56646e" />
        <circle cx="6" cy="49" r="6" fill="#3c4a55" />
        <path d="M5 15h2v33H5z" fill="#e0620f" />
        <circle cx="6" cy="49" r="4.500" fill="#e0700f" />
      </svg>
    </div>
  );
}
